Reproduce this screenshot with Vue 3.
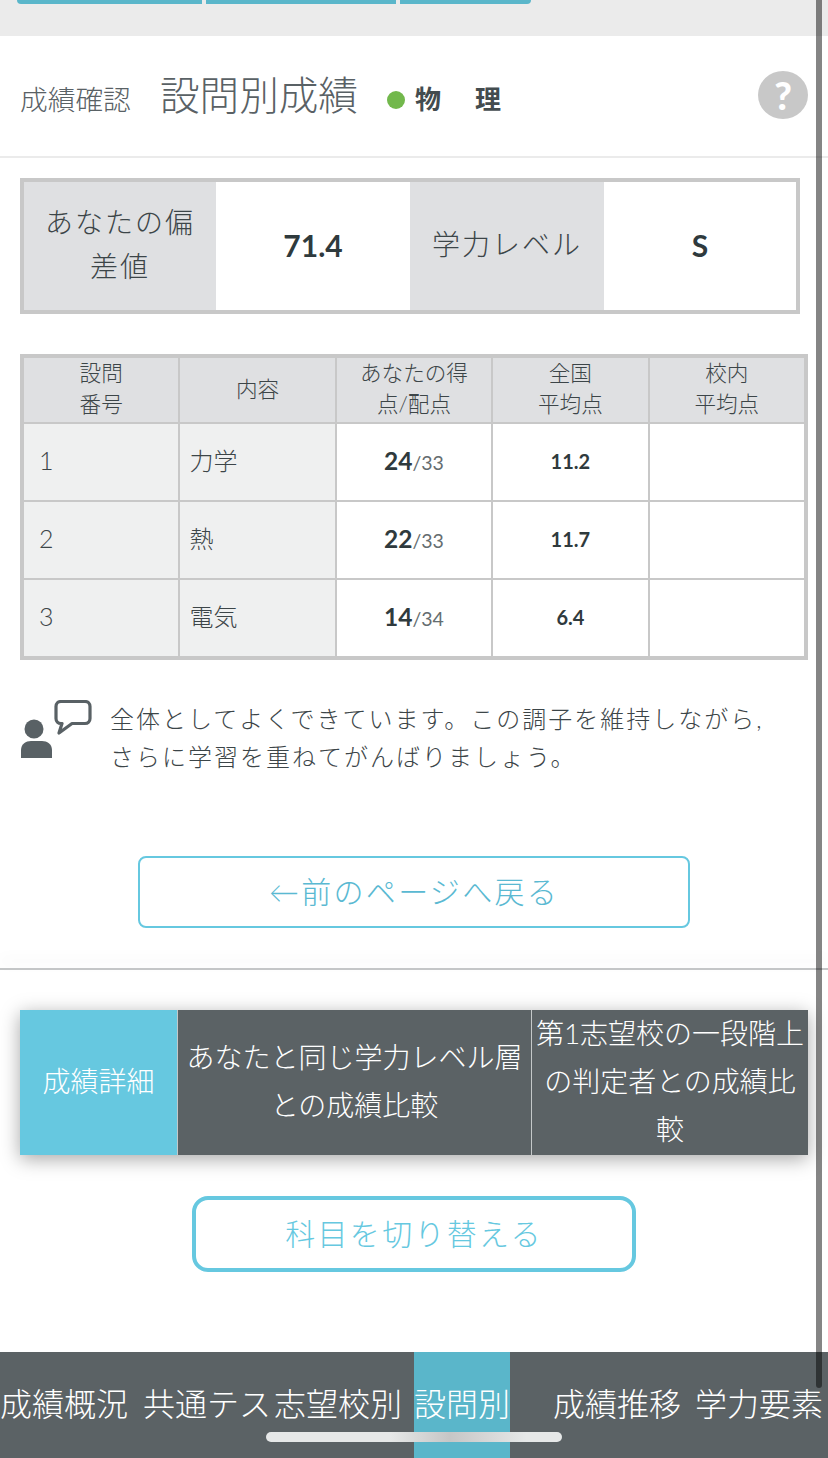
<script setup>
const rows = [
  { no: 1, name: '力学', score: 24, max: 33, avg: '11.2' },
  { no: 2, name: '熱', score: 22, max: 33, avg: '11.7' },
  { no: 3, name: '電気', score: 14, max: 34, avg: '6.4' },
]
const nav = [
  { label: '成績概況', cls: 'n1' },
  { label: '共通テス', cls: 'n2' },
  { label: '志望校別', cls: 'n3' },
  { label: '設問別', cls: 'n4 active' },
  { label: '成績推移', cls: 'n5' },
  { label: '学力要素', cls: 'n6' },
]
</script>

<template>
  <div class="page">
    <div class="topband">
      <span class="seg s1"></span><span class="seg s2"></span><span class="seg s3"></span>
    </div>

    <header class="head">
      <span class="crumb">成績確認</span>
      <h1 class="title">設問別成績</h1>
      <span class="dot"></span>
      <span class="subject">物　理</span>
      <span class="help">?</span>
    </header>

    <section class="summary">
      <div class="sl">あなたの偏差値</div>
      <div class="sv">71.4</div>
      <div class="sl">学力レベル</div>
      <div class="sv">S</div>
    </section>

    <table class="scores">
      <thead>
        <tr>
          <th>設問<br />番号</th>
          <th>内容</th>
          <th>あなたの得点/配点</th>
          <th>全国<br />平均点</th>
          <th>校内<br />平均点</th>
        </tr>
      </thead>
      <tbody>
        <tr v-for="r in rows" :key="r.no">
          <td class="lab no">{{ r.no }}</td>
          <td class="lab name">{{ r.name }}</td>
          <td class="score"><b>{{ r.score }}</b><small>/{{ r.max }}</small></td>
          <td class="avg">{{ r.avg }}</td>
          <td></td>
        </tr>
      </tbody>
    </table>

    <div class="comment">
      <svg class="cicon" width="72" height="60" viewBox="0 0 72 60">
        <circle cx="14" cy="29" r="9.5" fill="#596165" />
        <path d="M1 58V50c0-6 5-9 10-9h11c5 0 10 3 10 9v8z" fill="#596165" />
        <path d="M41 1.500h24c3 0 5 2 5 5v12c0 3-2 5-5 5H52L39 33l3-9.500h-1c-3 0-5-2-5-5v-12c0-3 2-5 5-5z" fill="none" stroke="#596165" stroke-width="3.200" stroke-linejoin="round" />
      </svg>
      <p class="ctext">全体としてよくできています。この調子を維持しながら,<br />さらに学習を重ねてがんばりましょう。</p>
    </div>

    <button class="back">←前のページへ戻る</button>
    <div class="rule"></div>

    <nav class="tabs">
      <div class="tab t1">成績詳細</div>
      <div class="tab t2">あなたと同じ学力レベル層との成績比較</div>
      <div class="tab t3">第1志望校の一段階上の判定者との成績比較</div>
    </nav>

    <button class="switch">科目を切り替える</button>

    <footer class="bottom">
      <span v-for="n in nav" :key="n.label" class="nitem" :class="n.cls">{{ n.label }}</span>
    </footer>

    <div class="home"></div>
    <div class="scrollbar"></div>
  </div>
</template>

<style>
html, body { margin: 0; background: #fff; }
</style>

<style scoped>
.page {
  position: relative;
  width: 828px;
  height: 1458px;
  overflow: hidden;
  background: #fff;
  color: #3c4548;
  font-family: Lato, "Noto Sans CJK JP", sans-serif;
  font-weight: 300;
}
.topband {
  height: 36px;
  background: #ebebeb;
  display: flex;
  align-items: flex-start;
  gap: 4px;
  padding-left: 17px;
  box-sizing: border-box;
}
.seg { height: 4px; background: #5ab6ca; }
.s1 { width: 185px; border-bottom-left-radius: 6px; }
.s2 { width: 190px; }
.s3 { width: 131px; border-bottom-right-radius: 6px; }

.head {
  height: 122px;
  box-sizing: border-box;
  border-bottom: 2px solid #ebebeb;
  display: flex;
  align-items: center;
  padding-left: 20px;
}
.crumb { font-size: 27.7px; color: #596165; width: 140px; line-height: 40px; padding-top: 8px; }
.title { margin: -2px 0 0; font-size: 39.6px; font-weight: 300; color: #596165; width: 227px; line-height: 50px; }
.dot { width: 18px; height: 18px; border-radius: 50%; background: #72b84c; margin-top: 8px; }
.subject { margin-left: 10px; font-size: 26px; font-weight: 700; letter-spacing: 4px; color: #434c4f; padding-top: 2px; }
.help {
  position: absolute;
  left: 758px;
  top: 71px;
  width: 50px;
  height: 48px;
  border-radius: 50%;
  background: #c8c8c8;
  color: #fff;
  font-size: 38px;
  font-weight: 900;
  line-height: 48px;
  text-align: center;
}

.summary {
  margin: 20px 0 0 20px;
  width: 780px;
  height: 136px;
  box-sizing: border-box;
  border: 4px solid #c8c8c8;
  display: grid;
  grid-template-columns: 192px 194px 194px 192px;
}
.sl {
  background: #dfe0e2;
  display: flex;
  align-items: center;
  justify-content: center;
  text-align: center;
  font-size: 28px;
  letter-spacing: 2px;
  line-height: 44px;
  padding: 0 18px 4px;
}
.sv {
  display: flex;
  align-items: center;
  justify-content: center;
  font-size: 30px;
  font-weight: 700;
  color: #2f3a3d;
  padding-bottom: 3px;
}

.scores {
  margin: 40px 0 0 20px;
  width: 788px;
  table-layout: fixed;
  border-collapse: separate;
  border-spacing: 2px;
  border: 2px solid #c8c8c8;
  background: #c8c8c8;
  box-sizing: border-box;
}
.scores th {
  height: 64px;
  box-sizing: border-box;
  padding: 0 15px 2px;
  background: #dfe0e2;
  font-size: 21.6px;
  font-weight: 300;
  line-height: 31px;
  color: #3c4548;
}
.scores td {
  height: 76px;
  box-sizing: border-box;
  padding: 0 0 3px;
  background: #fff;
  text-align: center;
}
.scores td.lab { background: #eff0f0; text-align: left; font-size: 24px; padding-bottom: 5px; }
.scores td.no { padding-left: 15px; font-size: 25px; }
.scores td.name { padding-left: 9px; }
.score b { font-size: 24.5px; font-weight: 700; color: #2f3a3d; }
.score small { font-size: 19.5px; color: #656d70; font-weight: 400; }
.avg { font-size: 20px; font-weight: 700; color: #2f3a3d; }

.comment { margin: 40px 0 0 20px; display: flex; height: 76px; align-items: flex-start; }
.cicon { flex: none; }
.ctext { margin: 0 0 0 18px; font-size: 24px; letter-spacing: 2px; line-height: 38px; color: #3c4548; white-space: nowrap; }

.back {
  display: block;
  margin: 80px 0 0 138px;
  width: 552px;
  height: 72px;
  box-sizing: border-box;
  border: 2px solid #66c8e0;
  border-radius: 8px;
  background: #fff;
  color: #5ab9d2;
  font: inherit;
  font-size: 30px;
  letter-spacing: 2.300px;
  padding: 0 0 4px;
}
.rule {
  margin-top: 40px;
  height: 2px;
  background: #c4c6c7;
  box-shadow: 0 -8px 14px rgba(0, 0, 0, 0.1);
}

.tabs {
  margin: 40px 0 0 20px;
  width: 788px;
  height: 145px;
  display: grid;
  grid-template-columns: 157px 353px 276px;
  grid-template-rows: 145px;
  column-gap: 1px;
  background: #c4c8c9;
  box-shadow: 0 4px 18px rgba(0, 0, 0, 0.35);
}
.tab {
  display: flex;
  align-items: center;
  justify-content: center;
  text-align: center;
  background: #5b6265;
  color: #fff;
  font-size: 28px;
  line-height: 48px;
  padding-bottom: 3px;
}
.t1 { background: #66c8e0; }
.t2 { padding-left: 6px; padding-right: 6px; }
.t3 { padding: 0 2px 3px; }

.switch {
  display: block;
  margin: 41px 0 0 192px;
  width: 444px;
  height: 76px;
  box-sizing: border-box;
  border: 4px solid #66c8e0;
  border-radius: 16px;
  background: #fff;
  color: #66c8e0;
  font: inherit;
  font-size: 30px;
  letter-spacing: 2.300px;
  padding: 0 0 4px;
}

.bottom {
  margin-top: 80px;
  height: 106px;
  background: #5b6265;
  display: flex;
  color: #fff;
  font-size: 32px;
  white-space: nowrap;
}
.nitem { height: 106px; line-height: 104px; }
.n2 { margin-left: 15px; }
.n3 { margin-left: 3px; }
.n4 { margin-left: 12px; }
.n5 { margin-left: 43px; }
.n6 { margin-left: 14px; }
.active { background: #5ab6ca; }

.home {
  position: absolute;
  left: 266px;
  top: 1432px;
  width: 296px;
  height: 10px;
  border-radius: 5px;
  background: linear-gradient(90deg, #e6e8e8 0 42%, #c6c6c6 62%, #e6e8e8 88%);
}
.scrollbar {
  position: absolute;
  left: 816px;
  top: 0;
  width: 6px;
  height: 1388px;
  border-radius: 0 0 3px 3px;
  background: rgba(0, 0, 0, 0.48);
}
</style>
